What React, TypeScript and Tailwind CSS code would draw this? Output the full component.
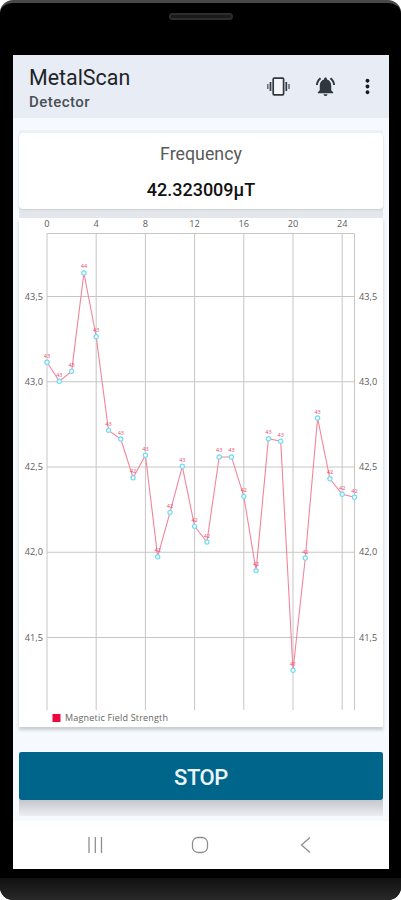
import { MdMoreVert, MdNotificationsActive } from "react-icons/md"

const readings = [
    43.114, 43.003, 43.061, 43.638, 43.264, 42.715, 42.664, 42.437, 42.569, 41.974, 42.234, 42.504, 42.152,
    42.06, 42.559, 42.559, 42.328, 41.892, 42.666, 42.651, 41.308, 41.966, 42.787, 42.431, 42.34, 42.323,
]
const xTicks = [0, 4, 8, 12, 16, 20, 24]
const yTicks = [43.5, 43, 42.5, 42, 41.5]

const LEFT = 28
const RIGHT = 335.5
const TOP = 15.5
const BOTTOM = 492

const px = (i: number) => LEFT + i * 12.3
const py = (v: number) => 78.5 + (43.5 - v) * 170.5
const tick = (v: number) => v.toFixed(1).replace(".", ",")

function Chart() {
    return (
        <svg width="364" height="509" viewBox="0 0 364 509" className="block font-['Open_Sans',sans-serif]">
            <g stroke="#c6c6c6" strokeWidth="1">
                <line x1={LEFT} x2={RIGHT} y1={TOP} y2={TOP} />
                {yTicks.map((v) => <line key={v} x1={LEFT} x2={RIGHT} y1={py(v)} y2={py(v)} />)}
                {xTicks.map((i) => <line key={i} x1={px(i)} x2={px(i)} y1={TOP} y2={BOTTOM} />)}
                <line x1={RIGHT} x2={RIGHT} y1={TOP} y2={BOTTOM} />
            </g>
            <g fontSize="9.2" fill="#5c5c5c">
                {xTicks.map((i) => <text key={i} x={px(i)} y="9" textAnchor="middle">{i}</text>)}
                {yTicks.map((v) => (
                    <g key={v}>
                        <text x="24" y={py(v) + 3} textAnchor="end">{tick(v)}</text>
                        <text x="340" y={py(v) + 3}>{tick(v)}</text>
                    </g>
                ))}
            </g>
            <polyline points={readings.map((v, i) => `${px(i)},${py(v)}`).join(" ")} fill="none" stroke="#f2859b" strokeWidth="1.1" />
            {readings.map((v, i) => (
                <g key={i}>
                    <text x={px(i)} y={py(v) - 4.5} textAnchor="middle" fontSize="5.5" fill="#ea4a6e">{Math.round(v)}</text>
                    <circle cx={px(i)} cy={py(v)} r="2.1" fill="#ffffff" stroke="#6fdcf5" strokeWidth="1.2" />
                </g>
            ))}
            <rect x="33.5" y="496" width="8" height="8" fill="#ee063f" />
            <text x="46" y="503" fontSize="9" fill="#666666" textLength="103">Magnetic Field Strength</text>
        </svg>
    )
}

function VibrationIcon() {
    return (
        <svg width="24" height="24" viewBox="0 0 24 24" fill="none" stroke="#30373d">
            <rect x="7.2" y="3.2" width="10.4" height="16.6" rx="1" fill="#f4f6fa" strokeWidth="1.7" />
            <path d="M4.5 7v9M20.3 7v9" strokeWidth="1.7" />
            <path d="M1.8 9v5M23 9v5" strokeWidth="1.6" stroke="#6a7077" />
        </svg>
    )
}

export default function App() {
    return (
        <div className="h-[900px] w-[401px] bg-white font-[Roboto,sans-serif]">
            <div className="flex h-full flex-col overflow-hidden rounded-[13px] border-t-[3px] border-[#484848] bg-black">
                <div className="flex h-[52px] shrink-0 justify-center pt-[10px]">
                    <div className="h-[7px] w-[64px] rounded-full border-2 border-[#2c2c2c] bg-[#1a1a1a]"></div>
                </div>
                <div className="ml-[13px] flex h-[814px] w-[376px] shrink-0 flex-col bg-[#f6f9fe]">
                    <header className="flex h-[63px] shrink-0 items-center bg-[#e8edf5] pl-4 text-[#30373d]">
                        <div className="w-[237px] pt-[3px]">
                            <h1 className="text-[21.4px] leading-[27px] text-[#202428]">MetalScan</h1>
                            <p className="text-[15px] leading-[22px] font-medium tracking-[0.45px] text-[#4a5056]">Detector</p>
                        </div>
                        <VibrationIcon />
                        <MdNotificationsActive className="ml-[24px] h-[23px] w-[23px]" />
                        <MdMoreVert className="ml-[19px] h-[23px] w-[23px] text-[#15191c]" />
                    </header>

                    <div className="mx-[6px] mt-3 flex h-[88px] shrink-0 flex-col bg-linear-to-b from-[#eef1f5] to-[#e3e6eb] pt-[3px]">
                        <div className="h-[76px] rounded-[4px] bg-white text-center shadow-[0_1px_2px_#c9cdd2]">
                            <p className="pt-[9px] text-[17.8px] leading-[24px] text-[#5a5a5a]">Frequency</p>
                            <p className="mt-[12px] text-[18px] leading-[24px] font-medium text-[#111111]">42.323009µT</p>
                        </div>
                    </div>

                    <div className="mx-[6px] h-[509px] shrink-0 bg-white shadow-[0_3px_3px_#c8cdd1]">
                        <Chart />
                    </div>

                    <div className="mx-[6px] mt-[25px] h-[64px] shrink-0 bg-linear-to-b from-[#c5c7cd] from-75% to-[#eceef4]">
                        <button className="h-[48px] w-full rounded-[3px] bg-[#00658b] pt-[3px] text-[22px] font-medium tracking-[-0.4px] text-[#edf5fb]">STOP</button>
                    </div>

                    <nav className="mt-[5px] flex grow items-center bg-white pl-[74px]">
                        <svg width="240" height="24" viewBox="0 0 240 24" fill="none" stroke="#8f8f8f" strokeWidth="1.3">
                            <path d="M2 4v16M8.3 4v16M14.5 4v16" />
                            <rect x="105.5" y="4.5" width="15" height="15" rx="5.5" />
                            <path d="M223 4.5l-8.5 7.5 8.5 7.5" />
                        </svg>
                    </nav>
                </div>
                <div className="mt-[9px] grow bg-linear-to-b from-[#111111] to-[#292929]"></div>
            </div>
        </div>
    )
}
